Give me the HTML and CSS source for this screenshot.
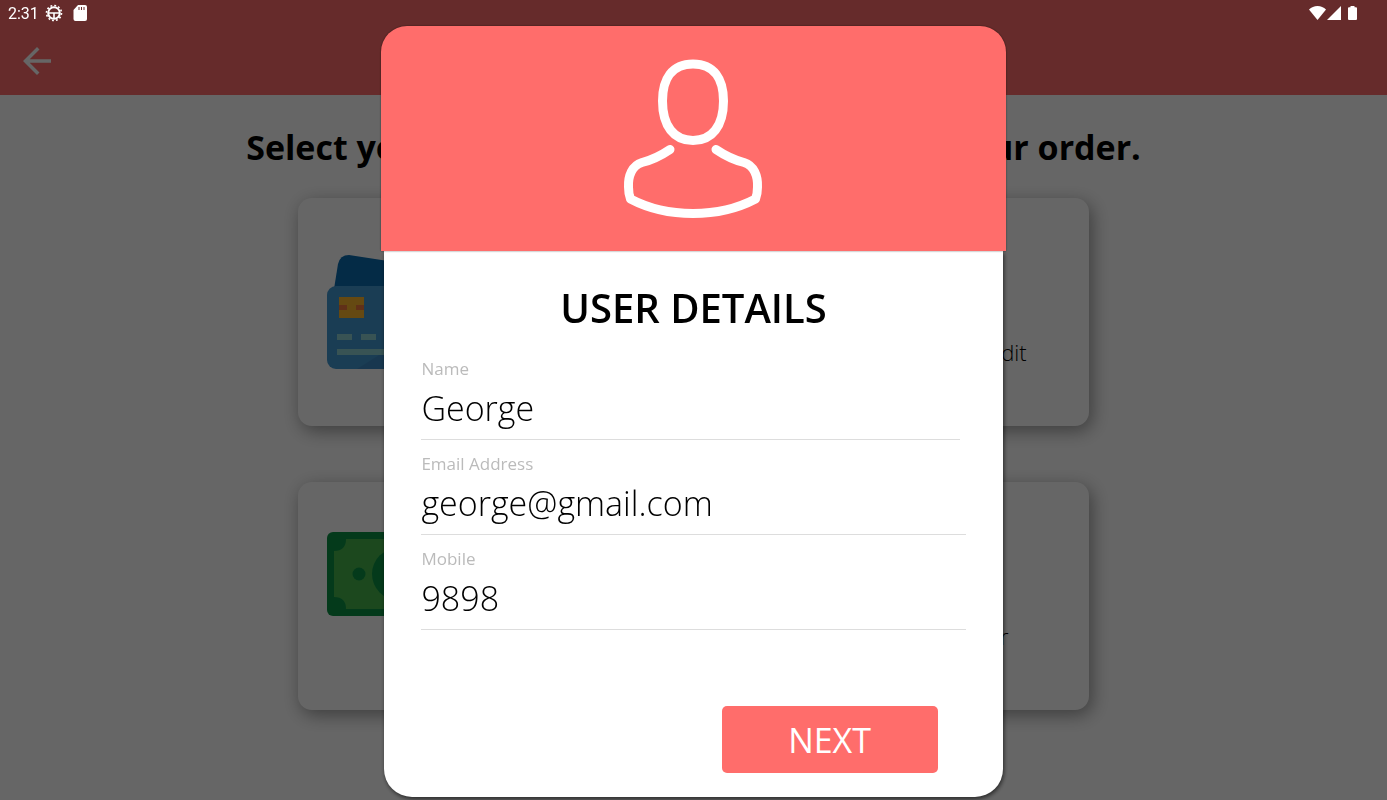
FILE: index.html
```html
<!DOCTYPE html>
<html lang="en">
<head>
    <meta charset="UTF-8">
    <meta name="viewport" content="width=device-width, initial-scale=1.0">
    <title>Payment</title>
    <link rel="stylesheet" href="styles.css">
</head>
<body>
    <div class="status-bar">
        <div class="status-left">
            <span>2:31</span>
            <svg width="18" height="18" viewBox="0 0 18 18" fill="none" stroke="#fff">
                <circle cx="9" cy="9" r="5.8" stroke-width="2"/>
                <circle cx="9" cy="9" r="7.5" stroke-width="1.6" stroke-dasharray="1.9 2.03"/>
                <path d="M3.5 9h11M9 9v5.500" stroke-width="1.6"/>
            </svg>
            <svg width="14" height="16" viewBox="0 0 14 16">
                <path fill="#fff" d="M5 0h7a2 2 0 0 1 2 2v12a2 2 0 0 1-2 2H2.500a2 2 0 0 1-2-2V5z"/>
                <path stroke="#662b2b" stroke-width="1" d="M6 2v3M8.500 2v3M11 2v3"/>
            </svg>
        </div>
        <div class="status-right">
            <svg width="17" height="14" viewBox="0 0 17 14"><path fill="#fff" d="M8.500 14L0 3.500Q3.500 0 8.500 0T17 3.500z"/></svg>
            <svg width="14" height="14" viewBox="0 0 14 14"><path fill="#fff" d="M14 0v14H0z"/></svg>
            <svg class="battery" width="9" height="14" viewBox="0 0 9 14"><path fill="#fff" d="M2.500 0h4v1.300H8q1 0 1 1V13q0 1-1 1H1q-1 0-1-1V2.300q0-1 1-1h1.500z"/></svg>
        </div>
    </div>

    <header class="app-bar">
        <button type="button" class="back-button" aria-label="Back">
            <svg width="42" height="42" viewBox="0 0 24 24"><path fill="#fff" d="M20 11H7.830l5.590-5.590L12 4l-8 8 8 8 1.410-1.410L7.830 13H20v-2z"/></svg>
        </button>
    </header>

    <main class="page">
        <h1 class="page-title">Select your payment method to continue your order.</h1>
        <div class="payment-card">
            <svg width="142" height="114" viewBox="0 0 142 114">
                <path fill="#0a6cb0" d="M7 34L11 9Q13 0 22 0l104 16q9 2 8 11l-6 50H7z"/>
                <rect y="31" width="128" height="83" rx="9" fill="#4398d1"/>
                <path fill="#3d8bc6" d="M30 114L128 52v53q0 9-9 9z"/>
                <rect x="12" y="42" width="25" height="21" fill="#fdb62f"/>
                <path fill="#f0793e" d="M12 50h8v5h-8zM29 50h8v5h-8z"/>
                <path fill="#8ccfd2" d="M10 79h15v6H10zM34 79h15v6H34zM10 94h62v6H10z"/>
            </svg>
            <p>Choose this option to pay with your debit or credit</p>
        </div>
        <div class="payment-card">
            <svg width="142" height="128" viewBox="0 0 142 128">
                <rect width="142" height="84" rx="6" fill="#0b9145"/>
                <path fill="#46b44d" d="M19 7h104q0 12 12 12v46q-12 0-12 12H19q0-12-12-12V19q12 0 12-12z"/>
                <circle cx="32" cy="42" r="6.500" fill="#0b9145"/>
                <circle cx="71" cy="42" r="26" fill="#0b9145"/>
            </svg>
            <p>Choose this option to pay by cash for your order</p>
        </div>
    </main>

    <div class="overlay">
        <div class="dialog" role="dialog" aria-labelledby="dialog-title">
            <div class="dialog-header">
                <svg width="142" height="162" viewBox="0 0 142 162" fill="none" stroke="#fff" stroke-width="9" stroke-linecap="round" stroke-linejoin="round">
                    <path d="M71 6C50 6 40.500 21 40.500 43C40.500 68 52 82.500 71 82.500S101.500 68 101.500 43C101.500 21 92 6 71 6z"/>
                    <path d="M48 91.500Q34 101 20 104.500C10 107.500 6 118 6.500 129Q6.500 136 8.500 141Q36 155.500 71 155.500T133.500 141Q135.500 136 135.500 129C136 118 132 107.500 122 104.500Q108 101 94 91.500"/>
                </svg>
            </div>
            <form class="dialog-body">
                <h2 id="dialog-title">USER DETAILS</h2>
                <div class="form-group form-group-name">
                    <label for="name">Name</label>
                    <input type="text" id="name" name="name" value="George">
                </div>
                <div class="form-group">
                    <label for="email">Email Address</label>
                    <input type="email" id="email" name="email" value="george@gmail.com">
                </div>
                <div class="form-group">
                    <label for="mobile">Mobile</label>
                    <input type="tel" id="mobile" name="mobile" value="9898">
                </div>
                <div class="button-container">
                    <button type="button" class="next-button">NEXT</button>
                </div>
            </form>
        </div>
    </div>
</body>
</html>
```
FILE: styles.css
```css
* {
    box-sizing: border-box;
}
body {
    margin: 0;
    min-height: 100vh;
    background-color: #fff;
    color: #000;
    font-family: "Open Sans", sans-serif;
    overflow: hidden;
}
svg {
    display: block;
    flex-shrink: 0;
}
button {
    border: none;
    cursor: pointer;
    font-family: inherit;
}
.status-bar {
    position: fixed;
    top: 0;
    left: 0;
    right: 0;
    z-index: 3;
    height: 26px;
    padding: 0 30px 0 8px;
    display: flex;
    justify-content: space-between;
    align-items: center;
    color: #fff;
    font: 16px Roboto, sans-serif;
}
.status-left {
    display: flex;
    align-items: center;
    gap: 6px;
}
.status-left svg + svg {
    margin-left: 4px;
}
.status-right {
    display: flex;
    align-items: center;
    gap: 1px;
}
.battery {
    margin-left: 6px;
}
.app-bar {
    height: 95px;
    padding: 26px 16px 0;
    display: flex;
    align-items: center;
    background-color: #ff6d6b;
}
.back-button {
    padding: 0;
    background: none;
}
.page {
    display: flex;
    flex-direction: column;
    align-items: center;
}
.page-title {
    margin: 30px 0 28px;
    font-size: 34px;
    line-height: 45px;
    white-space: nowrap;
}
.payment-card {
    width: 57%;
    height: 228px;
    margin-bottom: 56px;
    padding: 0 29px;
    display: flex;
    align-items: center;
    gap: 62px;
    border-radius: 14px;
    background-color: #fff;
    box-shadow: 3px 5px 18px rgba(0, 0, 0, 0.4);
}
.payment-card p {
    margin: 80px 0 0;
    font-size: 22px;
    font-weight: 300;
    line-height: 28px;
    white-space: nowrap;
}
.overlay {
    position: fixed;
    inset: 0;
    z-index: 2;
    padding-top: 26px;
    display: flex;
    justify-content: center;
    align-items: flex-start;
    background-color: rgba(0, 0, 0, 0.6);
}
.dialog {
    width: 45%;
    min-width: 360px;
}
.dialog-header {
    position: relative;
    height: 225px;
    display: flex;
    justify-content: center;
    align-items: center;
    border-radius: 26px 26px 0 0;
    background-color: #ff6d6b;
    box-shadow: 0 0 2px rgba(0, 0, 0, 0.6);
}
.dialog-body {
    margin: 0 3px;
    padding: 30px 37px 24px;
    border-radius: 0 0 28px 28px;
    background-color: #fff;
    box-shadow: 1px 2px 4px rgba(0, 0, 0, 0.6);
}
.dialog-body h2 {
    margin: 0 0 22px;
    font-size: 40px;
    font-weight: 600;
    line-height: 54px;
    text-align: center;
}
.form-group {
    margin-bottom: 12px;
}
.form-group-name {
    padding-right: 6px;
}
.form-group label {
    display: block;
    color: #bbb;
    font-size: 17px;
    line-height: 24px;
}
.form-group input {
    display: block;
    width: 100%;
    height: 59px;
    padding: 0 0 5px;
    border: none;
    border-bottom: 1px solid #ddd;
    outline: none;
    background: none;
    color: #000;
    font-family: inherit;
    font-size: 34px;
    font-weight: 300;
}
.button-container {
    margin: 76px 28px 0 0;
    display: flex;
    justify-content: flex-end;
}
.next-button {
    width: 216px;
    height: 67px;
    border-radius: 5px;
    background-color: #ff6d6b;
    color: #fff;
    font-size: 34px;
}
```
